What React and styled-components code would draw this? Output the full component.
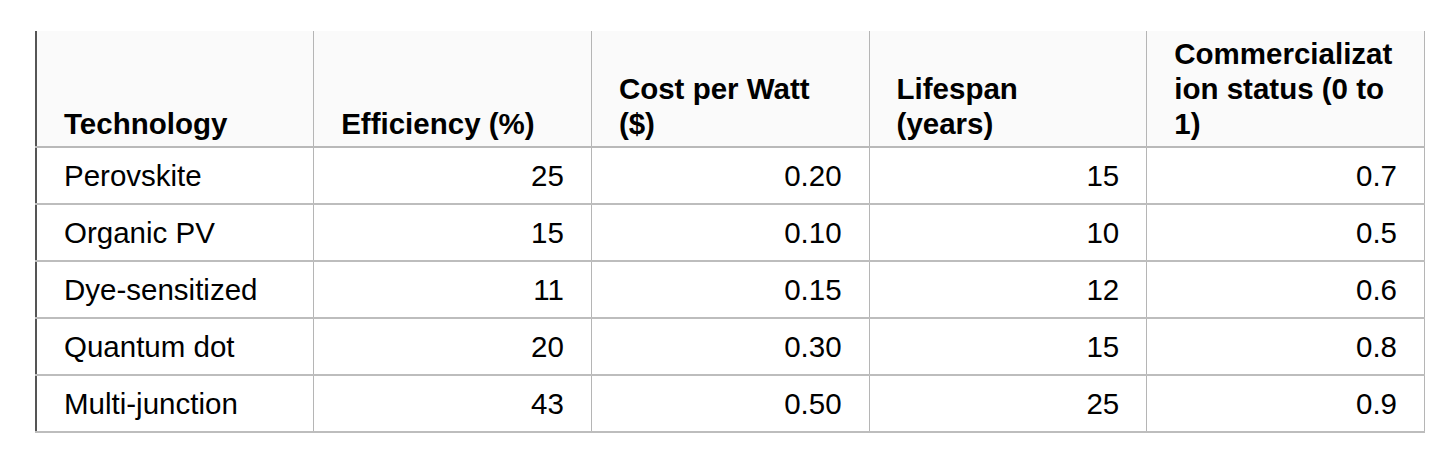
import styled, { createGlobalStyle } from 'styled-components';

const COLUMNS = [
  { title: 'Technology', key: 'name', align: 'left' },
  { title: 'Efficiency (%)', key: 'efficiency', align: 'right' },
  { title: 'Cost per Watt ($)', key: 'cost', align: 'right' },
  { title: 'Lifespan (years)', key: 'lifespan', align: 'right' },
  { title: 'Commercialization status (0 to 1)', key: 'status', align: 'right' },
];

const ROWS = [
  { name: 'Perovskite', efficiency: '25', cost: '0.20', lifespan: '15', status: '0.7' },
  { name: 'Organic PV', efficiency: '15', cost: '0.10', lifespan: '10', status: '0.5' },
  { name: 'Dye-sensitized', efficiency: '11', cost: '0.15', lifespan: '12', status: '0.6' },
  { name: 'Quantum dot', efficiency: '20', cost: '0.30', lifespan: '15', status: '0.8' },
  { name: 'Multi-junction', efficiency: '43', cost: '0.50', lifespan: '25', status: '0.9' },
];

const App = () => {
  return (
    <Page>
      <GlobalStyle />
      <Table>
        <colgroup>
          {COLUMNS.map((col) => (
            <col key={col.key} />
          ))}
        </colgroup>
        <thead>
          <tr>
            {COLUMNS.map((col) => (
              <HeadCell key={col.key}>{col.title}</HeadCell>
            ))}
          </tr>
        </thead>
        <tbody>
          {ROWS.map((row) => (
            <tr key={row.name}>
              {COLUMNS.map((col) => (
                <Cell key={col.key} $align={col.align}>
                  {row[col.key]}
                </Cell>
              ))}
            </tr>
          ))}
        </tbody>
      </Table>
    </Page>
  );
};

export default App;

const GlobalStyle = createGlobalStyle`
  html, body {
    margin: 0;
    padding: 0;
    background: #ffffff;
  }
  body {
    font-family: "Liberation Sans", Arial, Helvetica, sans-serif;
    color: #000000;
  }
`;

const Page = styled.div`
  width: 1456px;
  height: 464px;
  padding: 31px 0 0 35px;
  box-sizing: border-box;
  background: #ffffff;
`;

const Table = styled.table`
  width: 1390px;
  table-layout: fixed;
  border-collapse: collapse;
  border-left: 2px solid #555555;
  col {
    width: 20%;
  }
`;

const HeadCell = styled.th`
  background: #fafafa;
  text-align: left;
  vertical-align: bottom;
  font-size: 29.5px;
  font-weight: 700;
  line-height: 35px;
  padding: 5px 31px 5px 27px;
  overflow-wrap: anywhere;
  border-right: 1px solid #b5b5b5;
  border-bottom: 2px solid #b9b9b9;
`;

const Cell = styled.td`
  text-align: ${({ $align }) => $align};
  font-size: 29.5px;
  font-weight: 400;
  line-height: 35px;
  padding: 10px 27px 10px 27px;
  border-right: 1px solid #b5b5b5;
  border-bottom: 2px solid #bdbdbd;
  white-space: nowrap;
`;
